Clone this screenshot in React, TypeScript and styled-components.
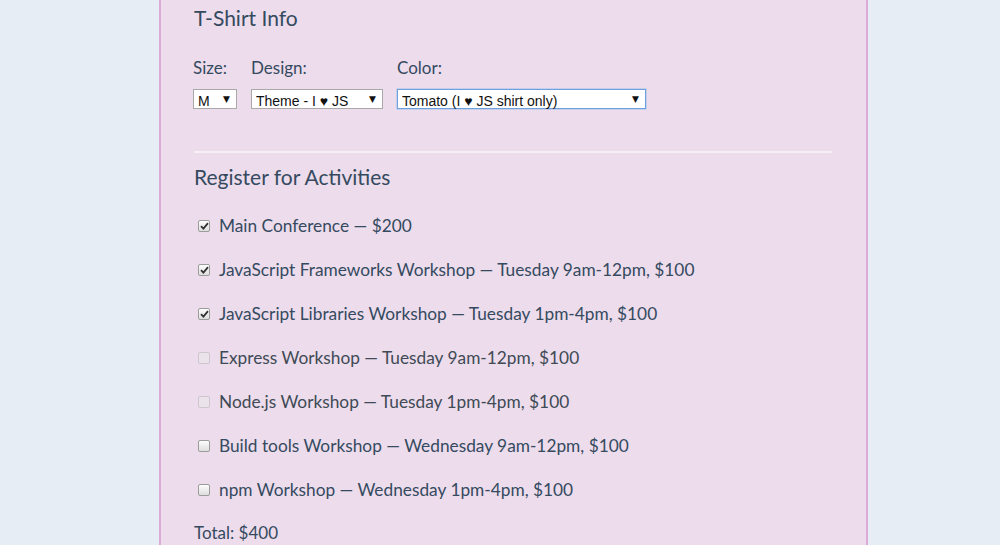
import React, { FC } from "react";
import styled, { createGlobalStyle } from "styled-components";

const GlobalStyle = createGlobalStyle`
  body {
    margin: 0;
    background: #e6edf5;
    font-family: "Lato", "Noto Sans", sans-serif;
    color: #354a5f;
  }
`;

const Page = styled.div`
  display: flex;
  justify-content: flex-start;
  padding-left: 159px;
  height: 545px;
  overflow: hidden;
`;

const Panel = styled.form`
  background: #ecdcec;
  border-left: 2px solid #dcaad6;
  border-right: 2px solid #dcaad6;
  padding: 5px 34px 0 33px;
  box-sizing: border-box;
  width: 709px;
`;

const Heading = styled.h2`
  margin: 0;
  font-size: 21px;
  font-weight: 400;
  line-height: 26px;
`;

const FieldRow = styled.div`
  display: flex;
  gap: 14px;
  margin: 27px 0 0 -1px;
`;

const Field = styled.div`
  display: flex;
  flex-direction: column;
  gap: 11px;
`;

const Label = styled.label`
  font-size: 17px;
  line-height: 20px;
`;

const SelectWrap = styled.div<{ $width: number; $focused?: boolean }>`
  position: relative;
  width: ${({ $width }) => $width}px;
  height: 20px;
  box-sizing: border-box;
  background: #fff;
  border: 1px solid ${({ $focused }) => ($focused ? "#6f9fdc" : "#a9a9a9")};
  box-shadow: ${({ $focused }) => ($focused ? "0 0 0 0.5px #9cc0ee" : "none")};
`;

const Select = styled.select`
  appearance: none;
  border: none;
  background: transparent;
  width: 100%;
  height: 100%;
  padding: 0 0 0 4px;
  margin: 0;
  font-family: "Liberation Sans", Arial, sans-serif;
  font-size: 14px;
  color: #111;
  outline: none;
`;

const Arrow = styled.span`
  position: absolute;
  right: 6px;
  top: 3px;
  font-family: "DejaVu Sans", sans-serif;
  font-size: 9px;
  line-height: 12px;
  color: #111;
  pointer-events: none;
`;

const Divider = styled.hr`
  border: none;
  height: 2px;
  background: #f6eff6;
  margin: 42px 0 0 0;
`;

const SectionHeading = styled(Heading)`
  margin-top: 11px;
`;

const ActivityList = styled.div`
  display: flex;
  flex-direction: column;
  gap: 20px;
  margin-top: 24px;
  padding-left: 4px;
`;

const Activity = styled.label<{ $disabled?: boolean }>`
  display: flex;
  align-items: center;
  gap: 9px;
  font-size: 17.3px;
  line-height: 24px;
  color: ${({ $disabled }) => ($disabled ? "#404a55" : "#354a5f")};
`;

const Box = styled.span<{ $disabled?: boolean }>`
  width: 12px;
  height: 12px;
  box-sizing: border-box;
  border-radius: 2px;
  border: 1px solid ${({ $disabled }) => ($disabled ? "#cfc6cf" : "#9c9c9c")};
  background: ${({ $disabled }) =>
    $disabled ? "#eae4ea" : "linear-gradient(#fdfdfd, #dedede)"};
  display: flex;
  align-items: center;
  justify-content: center;
  margin-top: -1px;
`;

const Total = styled.div`
  font-size: 17px;
  line-height: 24px;
  margin-top: 19px;
`;

const activities = [
  { title: "Main Conference — $200", checked: true },
  { title: "JavaScript Frameworks Workshop — Tuesday 9am-12pm, $100", checked: true },
  { title: "JavaScript Libraries Workshop — Tuesday 1pm-4pm, $100", checked: true },
  { title: "Express Workshop — Tuesday 9am-12pm, $100", disabled: true },
  { title: "Node.js Workshop — Tuesday 1pm-4pm, $100", disabled: true },
  { title: "Build tools Workshop — Wednesday 9am-12pm, $100" },
  { title: "npm Workshop — Wednesday 1pm-4pm, $100" },
];

const Check: FC = () => (
  <svg width="9" height="8" viewBox="0 0 9 8">
    <path d="M1 4.2 L3.4 6.6 L8 1.2" fill="none" stroke="#333" strokeWidth="1.8" />
  </svg>
);

const App: FC = () => {
  return (
    <>
      <GlobalStyle />
      <Page>
        <Panel>
          <Heading>T-Shirt Info</Heading>
          <FieldRow>
            <Field>
              <Label>Size:</Label>
              <SelectWrap $width={44}>
                <Select defaultValue="M">
                  <option>M</option>
                </Select>
                <Arrow>▼</Arrow>
              </SelectWrap>
            </Field>
            <Field>
              <Label>Design:</Label>
              <SelectWrap $width={132}>
                <Select>
                  <option>Theme - I ♥ JS</option>
                </Select>
                <Arrow>▼</Arrow>
              </SelectWrap>
            </Field>
            <Field>
              <Label>Color:</Label>
              <SelectWrap $width={249} $focused>
                <Select>
                  <option>Tomato (I ♥ JS shirt only)</option>
                </Select>
                <Arrow>▼</Arrow>
              </SelectWrap>
            </Field>
          </FieldRow>
          <Divider />
          <SectionHeading>Register for Activities</SectionHeading>
          <ActivityList>
            {activities.map((item, index) => (
              <Activity key={index} $disabled={item.disabled}>
                <Box $disabled={item.disabled}>{item.checked && <Check />}</Box>
                <span>{item.title}</span>
              </Activity>
            ))}
          </ActivityList>
          <Total>Total: $400</Total>
        </Panel>
      </Page>
    </>
  );
};

export default App;
